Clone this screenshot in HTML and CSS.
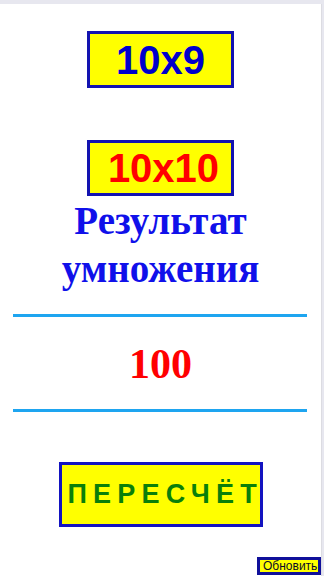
FILE: index.html
```html
<!DOCTYPE html>
<html lang="ru">
<head>
<meta charset="utf-8">
<title>Умножение</title>
<link rel="stylesheet" href="styles.css">
</head>
<body>
<div class="page">
  <div class="task task-first"><span class="task-text blue">10x9</span></div>
  <div class="task task-second"><span class="task-text red shift">10x10</span></div>
  <h1 class="title">Результат<br>умножения</h1>
  <hr class="rule rule-top">
  <div class="result">100</div>
  <hr class="rule rule-bottom">
  <div class="recalc"><span class="recalc-text">ПЕРЕСЧЁТ</span></div>
  <div class="refresh-row"><button class="refresh">Обновить</button></div>
</div>
</body>
</html>
```

FILE: styles.css
```css
html, body {
  margin: 0;
  padding: 0;
}
body {
  background: #e7e7ef;
  width: 324px;
  height: 576px;
  overflow: hidden;
}
.page {
  margin-top: 4px;
  width: 321px;
  height: 572px;
  background: #ffffff;
  border-right: 1px solid #dcdce2;
  display: flex;
  flex-direction: column;
  align-items: center;
}
.task {
  box-sizing: border-box;
  width: 147px;
  background: #ffff00;
  border: 3px solid #1313b0;
  display: flex;
  align-items: center;
  justify-content: center;
}
.task-first {
  margin-top: 27px;
  height: 57px;
}
.task-second {
  margin-top: 52px;
  height: 56px;
}
.task-text {
  font-family: "Liberation Sans", Arial, sans-serif;
  font-weight: bold;
  font-size: 40px;
  line-height: 1;
}
.shift {
  padding-left: 6px;
}
.blue { color: #0000cc; }
.red { color: #ff0000; }
.title {
  margin: 1px 0 0 0;
  font-family: "Liberation Serif", "Times New Roman", serif;
  font-weight: bold;
  font-size: 39px;
  line-height: 48px;
  color: #1010ea;
  text-align: center;
}
.rule {
  box-sizing: border-box;
  width: 294px;
  height: 3px;
  margin: 0;
  border: 0;
  background: #1ea5f0;
  align-self: flex-start;
  margin-left: 13px;
}
.rule-top {
  margin-top: 21px;
}
.result {
  margin-top: 23px;
  font-family: "Liberation Serif", "Times New Roman", serif;
  font-weight: bold;
  font-size: 42px;
  line-height: 48px;
  color: #ff0000;
}
.rule-bottom {
  margin-top: 21px;
}
.recalc {
  box-sizing: border-box;
  margin-top: 50px;
  width: 204px;
  height: 65px;
  background: #ffff00;
  border: 3px solid #1313c0;
  display: flex;
  align-items: center;
  padding-left: 6px;
  overflow: hidden;
  white-space: nowrap;
}
.recalc-text {
  font-family: "Liberation Sans", Arial, sans-serif;
  font-weight: bold;
  font-size: 27px;
  letter-spacing: 6.2px;
  color: #0a7f0a;
}
.refresh-row {
  margin-top: 30px;
  align-self: stretch;
  display: flex;
  justify-content: flex-end;
}
.refresh {
  box-sizing: border-box;
  width: 64px;
  height: 18px;
  padding: 0 0 0 3px;
  margin: 0;
  background: #ffff00;
  border: 3px solid #10109a;
  font-family: "Liberation Sans", Arial, sans-serif;
  font-size: 12px;
  line-height: 12px;
  color: #0a0a28;
  white-space: nowrap;
  overflow: hidden;
  display: flex;
  align-items: center;
  justify-content: flex-start;
}
```
